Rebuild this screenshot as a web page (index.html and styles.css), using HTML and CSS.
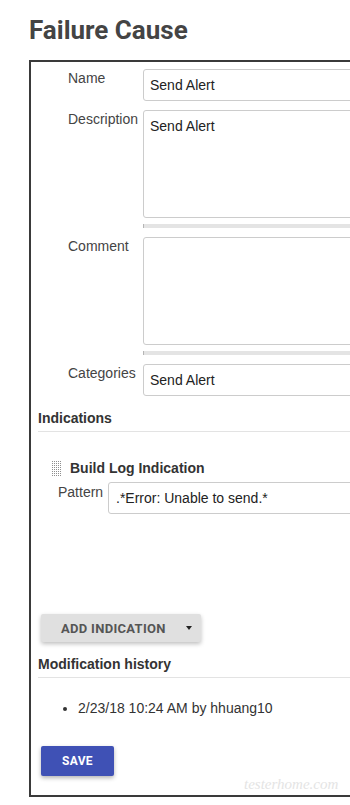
FILE: index.html
```html
<!DOCTYPE html>
<html>
<head>
<meta charset="utf-8">
<link rel="stylesheet" href="styles.css">
</head>
<body>
<div class="page">
  <h1 class="title">Failure Cause</h1>
  <div class="box">
    <div class="fields">
      <label class="lbl">Name</label>
      <div class="ctl"><input class="inp" type="text" value="Send Alert"></div>
      <label class="lbl">Description</label>
      <div class="ctl"><textarea class="ta">Send Alert</textarea><div class="handle"></div></div>
      <label class="lbl">Comment</label>
      <div class="ctl"><textarea class="ta"></textarea><div class="handle"></div></div>
      <label class="lbl">Categories</label>
      <div class="ctl"><input class="inp" type="text" value="Send Alert"></div>
    </div>

    <h2 class="sec">Indications</h2>
    <div class="ind">
      <div class="ind-head"><span class="grip"></span><span class="ind-title">Build Log Indication</span></div>
      <div class="ind-row">
        <label class="lbl2">Pattern</label>
        <input class="inp inp-pat" type="text" value=".*Error: Unable to send.*">
      </div>
    </div>

    <button class="add" type="button"><span>ADD INDICATION</span><span class="caret"></span></button>

    <h2 class="sec sec-hist">Modification history</h2>
    <ul class="hist">
      <li>2/23/18 10:24 AM by hhuang10</li>
    </ul>

    <button class="save" type="button">SAVE</button>
  </div>
  <div class="watermark">testerhome.com</div>
</div>
</body>
</html>
```

FILE: styles.css
```css
html, body {
  margin: 0;
  padding: 0;
  overflow: hidden;
  background: #fff;
}

body {
  font-family: "Liberation Sans", Arial, sans-serif;
  font-size: 14px;
  color: #333;
}

.page {
  position: relative;
  width: 460px;
  padding: 15px 0 0 29px;
}

.title {
  margin: 0 0 14px;
  font-family: Roboto, "Liberation Sans", sans-serif;
  font-weight: 700;
  font-size: 26px;
  line-height: 31px;
  color: #444;
}

.box {
  width: 400px;
  border: 2px solid #3a3a3a;
  padding: 7px 0 19px 7px;
}

.fields {
  display: grid;
  grid-template-columns: 105px 1fr;
  row-gap: 9px;
}

.lbl {
  padding: 1px 0 0 30px;
  line-height: 16px;
  color: #444;
}

.ctl {
  display: flex;
  flex-direction: column;
}

.inp {
  display: block;
  box-sizing: border-box;
  width: 100%;
  height: 32px;
  margin: 0;
  border: 1px solid #ccc;
  border-radius: 3px;
  padding: 0 6px;
  font-family: "Liberation Sans", Arial, sans-serif;
  font-size: 14px;
  color: #222;
  background: #fff;
  outline: none;
}

.ta {
  display: block;
  box-sizing: border-box;
  width: 100%;
  height: 108px;
  margin: 0;
  border: 1px solid #ccc;
  border-radius: 3px;
  padding: 7px 6px;
  font-family: "Liberation Sans", Arial, sans-serif;
  font-size: 14px;
  line-height: 16px;
  color: #222;
  resize: none;
  outline: none;
}

.handle {
  height: 4px;
  margin-top: 6px;
  background: #e4e4e4;
  border-left: 1px solid #b5b5b5;
}

.sec {
  margin: 14px 0 0;
  padding-bottom: 5px;
  border-bottom: 1px solid #e3e3e3;
  font-size: 14px;
  font-weight: 700;
  line-height: 16px;
  color: #333;
}

.ind {
  margin-top: 28px;
  padding-left: 13px;
}

.ind-head {
  display: flex;
  align-items: flex-start;
  gap: 9px;
}

.grip {
  width: 10px;
  height: 17px;
  flex: none;
  background:
    linear-gradient(90deg, #fff 1px, transparent 1px) 0 0 / 2px 2px,
    linear-gradient(#fff 1px, transparent 1px) 0 0 / 2px 2px,
    #8f8f8f;
}

.ind-title {
  font-weight: 700;
  line-height: 16px;
  color: #333;
}

.ind-row {
  display: grid;
  grid-template-columns: 50px 1fr;
  margin-top: 5px;
  padding-left: 7px;
}

.lbl2 {
  padding-top: 2px;
  line-height: 16px;
  color: #444;
}

.inp-pat {
  padding: 0 7px;
}

.add {
  display: flex;
  align-items: center;
  height: 28px;
  margin: 100px 0 0 3px;
  padding: 0 9px 0 20px;
  border: none;
  border-radius: 2px;
  background: #e0e0e0;
  box-shadow: 0 2px 4px rgba(0, 0, 0, 0.25);
  font-family: Roboto, "Liberation Sans", sans-serif;
  font-weight: 700;
  font-size: 13px;
  letter-spacing: 0.3px;
  color: #555;
}

.caret {
  width: 0;
  height: 0;
  margin-left: 20px;
  border-left: 3.5px solid transparent;
  border-right: 3.5px solid transparent;
  border-top: 4px solid #222;
}

.hist {
  margin: 22px 0 0;
  padding-left: 40px;
  line-height: 16px;
  color: #333;
}

.save {
  display: block;
  width: 73px;
  height: 30px;
  margin: 30px 0 0 3px;
  padding: 0;
  border: none;
  border-radius: 2px;
  background: #3f51b5;
  box-shadow: 0 2px 4px rgba(0, 0, 0, 0.3);
  font-family: Roboto, "Liberation Sans", sans-serif;
  font-weight: 700;
  font-size: 12px;
  letter-spacing: 0.3px;
  color: #fff;
}

.watermark {
  position: absolute;
  left: 244px;
  top: 776px;
  font-family: "Liberation Serif", serif;
  font-style: italic;
  font-size: 15px;
  color: #e4e4e4;
}
```
